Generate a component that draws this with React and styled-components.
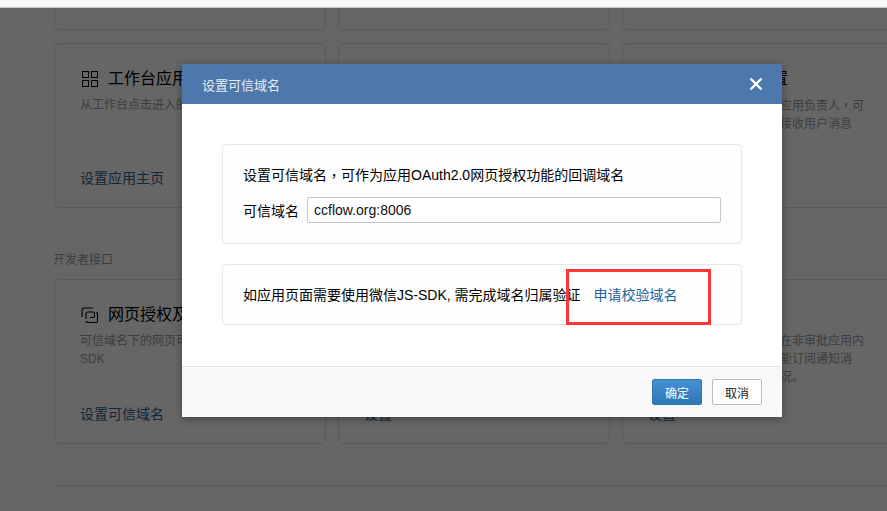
import styled, { createGlobalStyle } from "styled-components"

const GlobalStyle = createGlobalStyle`
  html, body {
    margin: 0;
    padding: 0;
    background: #fff;
  }
  * {
    box-sizing: border-box;
  }
`

const FONT = `"Liberation Sans", "Noto Sans CJK SC", sans-serif`

const Frame = styled.div`
  position: relative;
  width: 887px;
  height: 511px;
  overflow: hidden;
  font-family: ${FONT};
  font-size: 14px;
  color: #000;
`

const TopStrip = styled.div`
  height: 8px;
  background: #f8f8f8;
  border-bottom: 1px solid #c9c9c9;
`

const Page = styled.div`
  position: relative;
  height: 503px;
  overflow: hidden;
  padding-left: 54px;
  background: #fff;
`

const Overlay = styled.div`
  position: absolute;
  inset: 0;
  background: rgba(0, 0, 0, 0.6);
`

const CardRow = styled.div`
  display: grid;
  grid-template-columns: repeat(3, 272px);
  column-gap: 12px;
  width: 900px;
  margin-top: ${p => p.$top || 0}px;
`

const Card = styled.div`
  height: 165px;
  padding: 27px 20px 0 25px;
  border: 1px solid #e4e4e4;
  border-radius: 4px;
`

const CutCard = styled.div`
  height: 22px;
  border: 1px solid #e4e4e4;
  border-top: 0;
  border-radius: 0 0 4px 4px;
`

const CardTitle = styled.div`
  display: flex;
  align-items: center;
  gap: 10px;
  height: 16px;
  font-size: 16px;
  line-height: 16px;
  white-space: nowrap;
`

const CardDesc = styled.p`
  height: 54px;
  margin: 9px 0 0;
  font-size: 12px;
  line-height: 18px;
  color: #999;
  white-space: nowrap;
`

const CardLink = styled.a`
  display: block;
  margin-top: 18px;
  font-size: 14px;
  line-height: 20px;
  color: #2f6291;
`

const SectionLabel = styled.div`
  margin: 42px 0 0 -1px;
  height: 20px;
  font-size: 12px;
  line-height: 20px;
  color: #999;
`

const Divider = styled.div`
  width: 900px;
  height: 1px;
  margin-top: 41px;
  background: #e4e4e4;
`

const Modal = styled.div`
  position: absolute;
  left: 182px;
  top: 64px;
  width: 600px;
  height: 353px;
  display: flex;
  flex-direction: column;
  background: #fff;
  box-shadow: 0 2px 8px rgba(0, 0, 0, 0.35);
`

const ModalHeader = styled.div`
  flex: none;
  display: flex;
  align-items: center;
  justify-content: space-between;
  height: 40px;
  padding: 0 18px 0 20px;
  background: #4d78ab;
  color: #e8edf4;
  font-size: 13px;
`

const CloseButton = styled.button`
  display: flex;
  width: 16px;
  height: 16px;
  padding: 0;
  border: 0;
  background: none;
  cursor: pointer;
`

const ModalBody = styled.div`
  flex: 1;
  display: flex;
  flex-direction: column;
  gap: 20px;
  padding: 40px 40px 0;
`

const Panel = styled.div`
  height: ${p => p.$height}px;
  padding: 20px 20px 0;
  border: 1px solid #e7e7e7;
  border-radius: 4px;
  background: #fdfdfd;
`

const PanelLine = styled.div`
  display: flex;
  align-items: center;
  line-height: 20px;
  white-space: nowrap;
`

const CenteredComma = styled.span`
  font-family: "Noto Sans CJK TC", sans-serif;
`

const FieldRow = styled.div`
  display: flex;
  align-items: center;
  gap: 8px;
  margin-top: 12px;
`

const TextInput = styled.input`
  width: 414px;
  height: 26px;
  padding: 0 6px;
  border: 1px solid #c6c6c6;
  border-radius: 2px;
  background: #fff;
  font-family: ${FONT};
  font-size: 14px;
  color: #111;
  outline: none;
`

const VerifyLink = styled.a`
  margin-left: 13px;
  color: #1a6399;
`

const ModalFooter = styled.div`
  flex: none;
  display: flex;
  justify-content: flex-end;
  gap: 10px;
  height: 51px;
  padding: 12px 20px 0 0;
  border-top: 1px solid #e5e5e5;
  background: #f8f8f8;
`

const Button = styled.button`
  width: 50px;
  height: 26px;
  padding: 0;
  border: 1px solid ${p => (p.$primary ? "#2d77b5" : "#bbb")};
  border-radius: 2px;
  background: ${p => (p.$primary ? "linear-gradient(#4590d4, #2f78b6)" : "#fff")};
  color: ${p => (p.$primary ? "#fff" : "#222")};
  font-family: ${FONT};
  font-size: 12px;
`

const Annotation = styled.div`
  position: absolute;
  left: 566px;
  top: 269px;
  width: 145px;
  height: 56px;
  border: 3px solid #ff3636;
`

function GridIcon() {
  return (
    <svg width="18" height="16" viewBox="0 0 18 16" fill="none" stroke="#000" strokeWidth="1">
      <rect x="2.500" y="0.500" width="6" height="6" />
      <rect x="11.500" y="0.500" width="6" height="6" />
      <rect x="2.500" y="9.500" width="6" height="6" />
      <rect x="11.500" y="9.500" width="6" height="6" />
    </svg>
  )
}

function OAuthIcon() {
  return (
    <svg width="18" height="16" viewBox="0 0 18 16" fill="none" stroke="#000" strokeWidth="1.1">
      <path d="M2 10V3a2 2 0 0 1 2-2h9" />
      <path d="M6 12V7a2 2 0 0 1 2-2h5a1.500 1.500 0 0 1 1.500 1.500V9a1.500 1.500 0 0 1-1.500 1.500H10" />
      <path d="M16 5.500a1.500 1.500 0 0 1 1.500 1.500v7a1.500 1.500 0 0 1-1.500 1.500H8a2 2 0 0 1-2-1.500" />
    </svg>
  )
}

function InfoCard({ icon, title, desc, link }) {
  return (
    <Card>
      <CardTitle>
        {icon}
        {title}
      </CardTitle>
      <CardDesc>
        {desc.map((line, i) => (
          <span key={i}>
            {line}
            <br />
          </span>
        ))}
      </CardDesc>
      <CardLink>{link}</CardLink>
    </Card>
  )
}

export default function App() {
  return (
    <Frame>
      <GlobalStyle />
      <TopStrip />
      <Page>
        <CardRow>
          <CutCard />
          <CutCard />
          <CutCard />
        </CardRow>
        <CardRow $top={13}>
          <InfoCard
            icon={<GridIcon />}
            title="工作台应用主页"
            desc={["从工作台点击进入的页面"]}
            link="设置应用主页"
          />
          <InfoCard icon={<GridIcon />} title="功能设置" desc={["设置应用功能"]} link="设置" />
          <InfoCard
            icon={<GridIcon />}
            title="应用负责人设置"
            desc={[
              <>可以为这个应用指定一名应用负责人<CenteredComma>，</CenteredComma>可</>,
              "由负责人在企业微信端内接收用户消息",
            ]}
            link=""
          />
        </CardRow>
        <SectionLabel>开发者接口</SectionLabel>
        <CardRow $top={9}>
          <InfoCard
            icon={<OAuthIcon />}
            title="网页授权及JS-SDK"
            desc={["可信域名下的网页可以使用微信JS-", "SDK"]}
            link="设置可信域名"
          />
          <InfoCard icon={<GridIcon />} title="接收消息" desc={["设置接收消息"]} link="设置" />
          <InfoCard
            icon={<GridIcon />}
            title="审批接口"
            desc={[
              "可设置审批数据回调地址在非审批应用内",
              "在应用中查看审批情况也能订阅通知消",
              "息，了解最新审批进展情况。",
            ]}
            link="设置"
          />
        </CardRow>
        <Divider />
        <Overlay />
      </Page>
      <Modal>
        <ModalHeader>
          设置可信域名
          <CloseButton aria-label="关闭">
            <svg width="16" height="16" viewBox="0 0 16 16" stroke="#fff" strokeWidth="2.4" fill="none">
              <path d="M2.500 2.500l11 11M13.500 2.500l-11 11" />
            </svg>
          </CloseButton>
        </ModalHeader>
        <ModalBody>
          <Panel $height={100}>
            <PanelLine>
              设置可信域名<CenteredComma>，</CenteredComma>可作为应用OAuth2.0网页授权功能的回调域名
            </PanelLine>
            <FieldRow>
              可信域名
              <TextInput defaultValue="ccflow.org:8006" />
            </FieldRow>
          </Panel>
          <Panel $height={61}>
            <PanelLine>
              如应用页面需要使用微信JS-SDK, 需完成域名归属验证
              <VerifyLink>申请校验域名</VerifyLink>
            </PanelLine>
          </Panel>
        </ModalBody>
        <ModalFooter>
          <Button $primary>确定</Button>
          <Button>取消</Button>
        </ModalFooter>
      </Modal>
      <Annotation />
    </Frame>
  )
}
